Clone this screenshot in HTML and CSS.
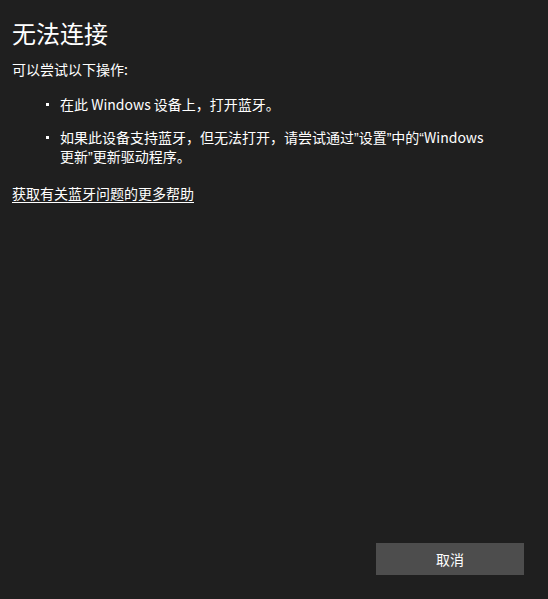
FILE: index.html
```html
<!DOCTYPE html>
<html lang="zh-CN">
<head>
<meta charset="utf-8">
<link rel="stylesheet" href="styles.css">
</head>
<body>
<div class="page">
  <h1 class="title">无法连接</h1>
  <p class="intro">可以尝试以下操作:</p>
  <ul class="tips">
    <li>在此 Windows 设备上，打开蓝牙。</li>
    <li>如果此设备支持蓝牙，但无法打开，请尝试通过<span class="q">”</span>设置<span class="q">”</span>中的<span class="q">“</span>Windows 更新<span class="q">”</span>更新驱动程序。</li>
  </ul>
  <a class="help" href="#">获取有关蓝牙问题的更多帮助</a>
  <div class="spacer"></div>
  <div class="actions">
    <button class="btn">取消</button>
  </div>
</div>
</body>
</html>
```
FILE: styles.css
```css
html, body {
  margin: 0;
  padding: 0;
  background: #1f1f1f;
  height: 100%;
}
body {
  font-family: "Noto Sans CJK SC", "Noto Sans", sans-serif;
  color: #ffffff;
  font-size: 14px;
}
.page {
  display: flex;
  flex-direction: column;
  height: 599px;
  box-sizing: border-box;
  padding: 16px 24px 24px 12px;
}
.title {
  margin: 0;
  font-size: 24px;
  font-weight: 400;
  line-height: 34px;
}
.intro {
  margin: 9px 0 0 0;
  line-height: 20px;
}
.tips {
  margin: 16px 0 0 0;
  padding: 0 0 0 48px;
  list-style: none;
}
.tips li {
  position: relative;
  line-height: 18px;
  margin-bottom: 15px;
  max-width: 430px;
}
.tips li::before {
  content: "";
  position: absolute;
  left: -14px;
  top: 8px;
  width: 3px;
  height: 3px;
  background: #ffffff;
}
.q {
  font-family: "Liberation Sans", sans-serif;
}
.help {
  color: #ffffff;
  line-height: 20px;
  align-self: flex-start;
  margin-top: 2px;
  text-decoration: underline;
  text-underline-offset: 3px;
}
.spacer { flex: 1; }
.actions {
  display: flex;
  justify-content: flex-end;
}
.btn {
  width: 148px;
  height: 32px;
  background: #4d4d4d;
  color: #ffffff;
  border: none;
  font-family: inherit;
  font-size: 14px;
  padding: 0;
}
```
